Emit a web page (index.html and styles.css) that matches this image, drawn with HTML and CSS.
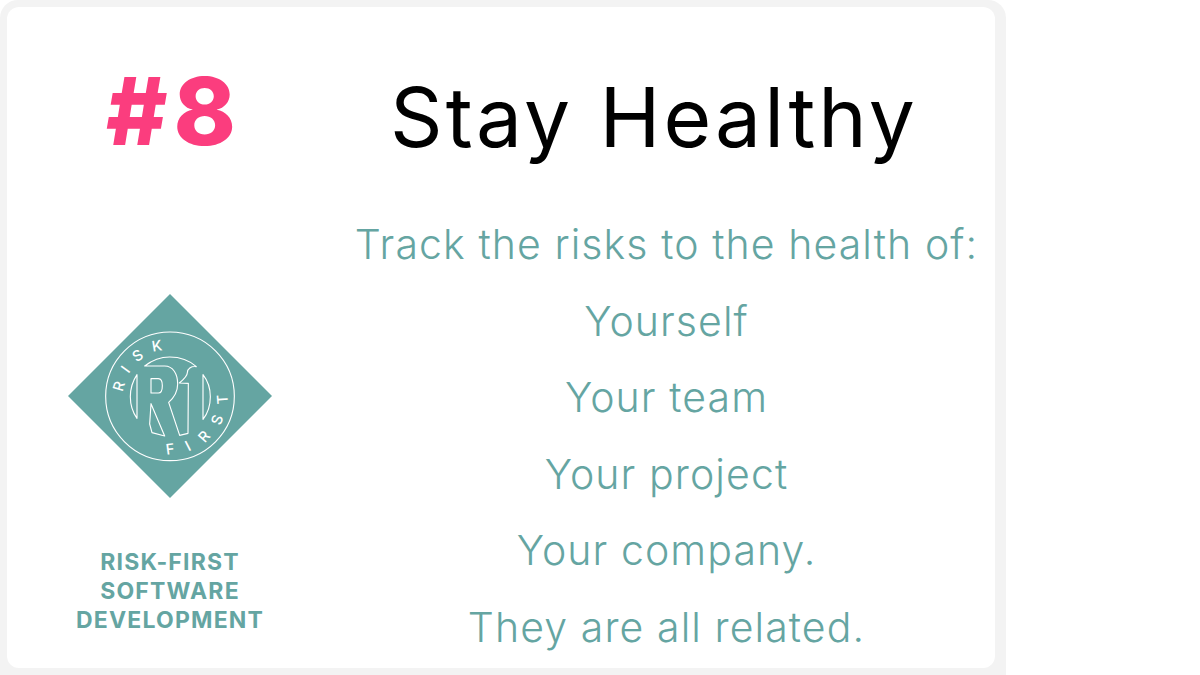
FILE: index.html
```html
<!DOCTYPE html>
<html lang="en">
<head>
<meta charset="utf-8">
<title>Stay Healthy</title>
<link rel="stylesheet" href="styles.css">
</head>
<body>
<main class="frame">
  <article class="card">
    <aside class="side">
      <div class="number">#8</div>
      <svg class="logo" viewBox="55 42 612 612" aria-label="Risk-First logo">
        <polygon class="dia" points="361,42 667,348 361,654 55,348"/>
        <circle class="ln" cx="361" cy="349" r="193"/>
        <path class="ln" d="M285 258 C308 240 335 231 360 231 C392 231 420 242 440 260 C424 258 413 266 413 278 C413 284 402 298 389 309 L416 310 L415 460 L390 466 L357 367 C374 352 384 335 384 312 C384 282 370 258 345 258 Z"/>
        <path class="ln" d="M304 296 L326 296 C334 296 338 304 338 317 C338 331 334 339 326 339 L304 339 Z"/>
        <path class="ln" d="M304 371 L345 468 L307 458 L300 432 Z"/>
        <path class="ln" d="M262 284 L262 415 C250 398 242 372 242 350 C242 326 250 302 262 284 Z"/>
        <path class="ln" d="M460 284 L460 418 C474 400 482 374 482 350 C482 326 474 302 460 284 Z"/>
        <path id="arcT" class="guide" d="M221.5 337.5 A140 140 0 0 1 420 222"/>
        <path id="arcB" class="guide" d="M350 521 A172 172 0 0 0 510 263"/>
        <text class="ring ring-top"><textPath href="#arcT">RISK</textPath></text>
        <text class="ring ring-bottom"><textPath href="#arcB">FIRST</textPath></text>
      </svg>
      <div class="brand">RISK-FIRST<br>SOFTWARE<br>DEVELOPMENT</div>
    </aside>
    <section class="content">
      <h1 class="title">Stay Healthy</h1>
      <div class="lines">
        <p>Track the risks to the health of:</p>
        <p>Yourself</p>
        <p>Your team</p>
        <p>Your project</p>
        <p>Your company.</p>
        <p>They are all related.</p>
      </div>
    </section>
  </article>
</main>
</body>
</html>
```

FILE: styles.css
```css
* { box-sizing: border-box; }
html, body { margin: 0; height: 675px; overflow: hidden; background: #fff; }
body { font-family: Inter, "Open Sans", sans-serif; }
.frame { width: 1006px; height: 691px; padding: 7px 11px 23px 7px; background: #f3f3f3; border-radius: 18px; }
.card { height: 661px; background: #fff; border-radius: 12px; display: grid; grid-template-columns: 326px 1fr; }
.side { display: flex; flex-direction: column; align-items: center; padding-top: 54px; }
.number { margin-left: 8px; font-size: 94px; font-weight: 800; line-height: 100px; color: #fb3d7e; letter-spacing: 6px; }
.logo { width: 204px; height: 204px; margin-top: 133px; }
.dia { fill: #65a5a2; }
.ln { fill: none; stroke: #fff; stroke-width: 3.4; stroke-linejoin: round; }
.guide { fill: none; stroke: none; }
.ring { font-size: 44px; fill: #fff; font-weight: 500; }
.ring-top { letter-spacing: 29px; }
.ring-bottom { letter-spacing: 41px; }
.brand { margin-top: 50px; font-size: 23px; line-height: 29px; font-weight: 700; color: #65a5a2; text-align: center; letter-spacing: 1.2px; }
.content { display: flex; flex-direction: column; align-items: center; padding-top: 66px; }
.title { margin: 0 0 0 -20px; font-size: 82px; line-height: 90px; font-weight: 400; color: #000; letter-spacing: 3.1px; }
.lines { margin-top: 43px; margin-left: 5px; font-size: 41px; font-weight: 300; color: #65a5a2; text-align: center; letter-spacing: 1.09px; }
.lines p { margin: 0; height: 76.5px; line-height: 76.5px; white-space: nowrap; }
```
